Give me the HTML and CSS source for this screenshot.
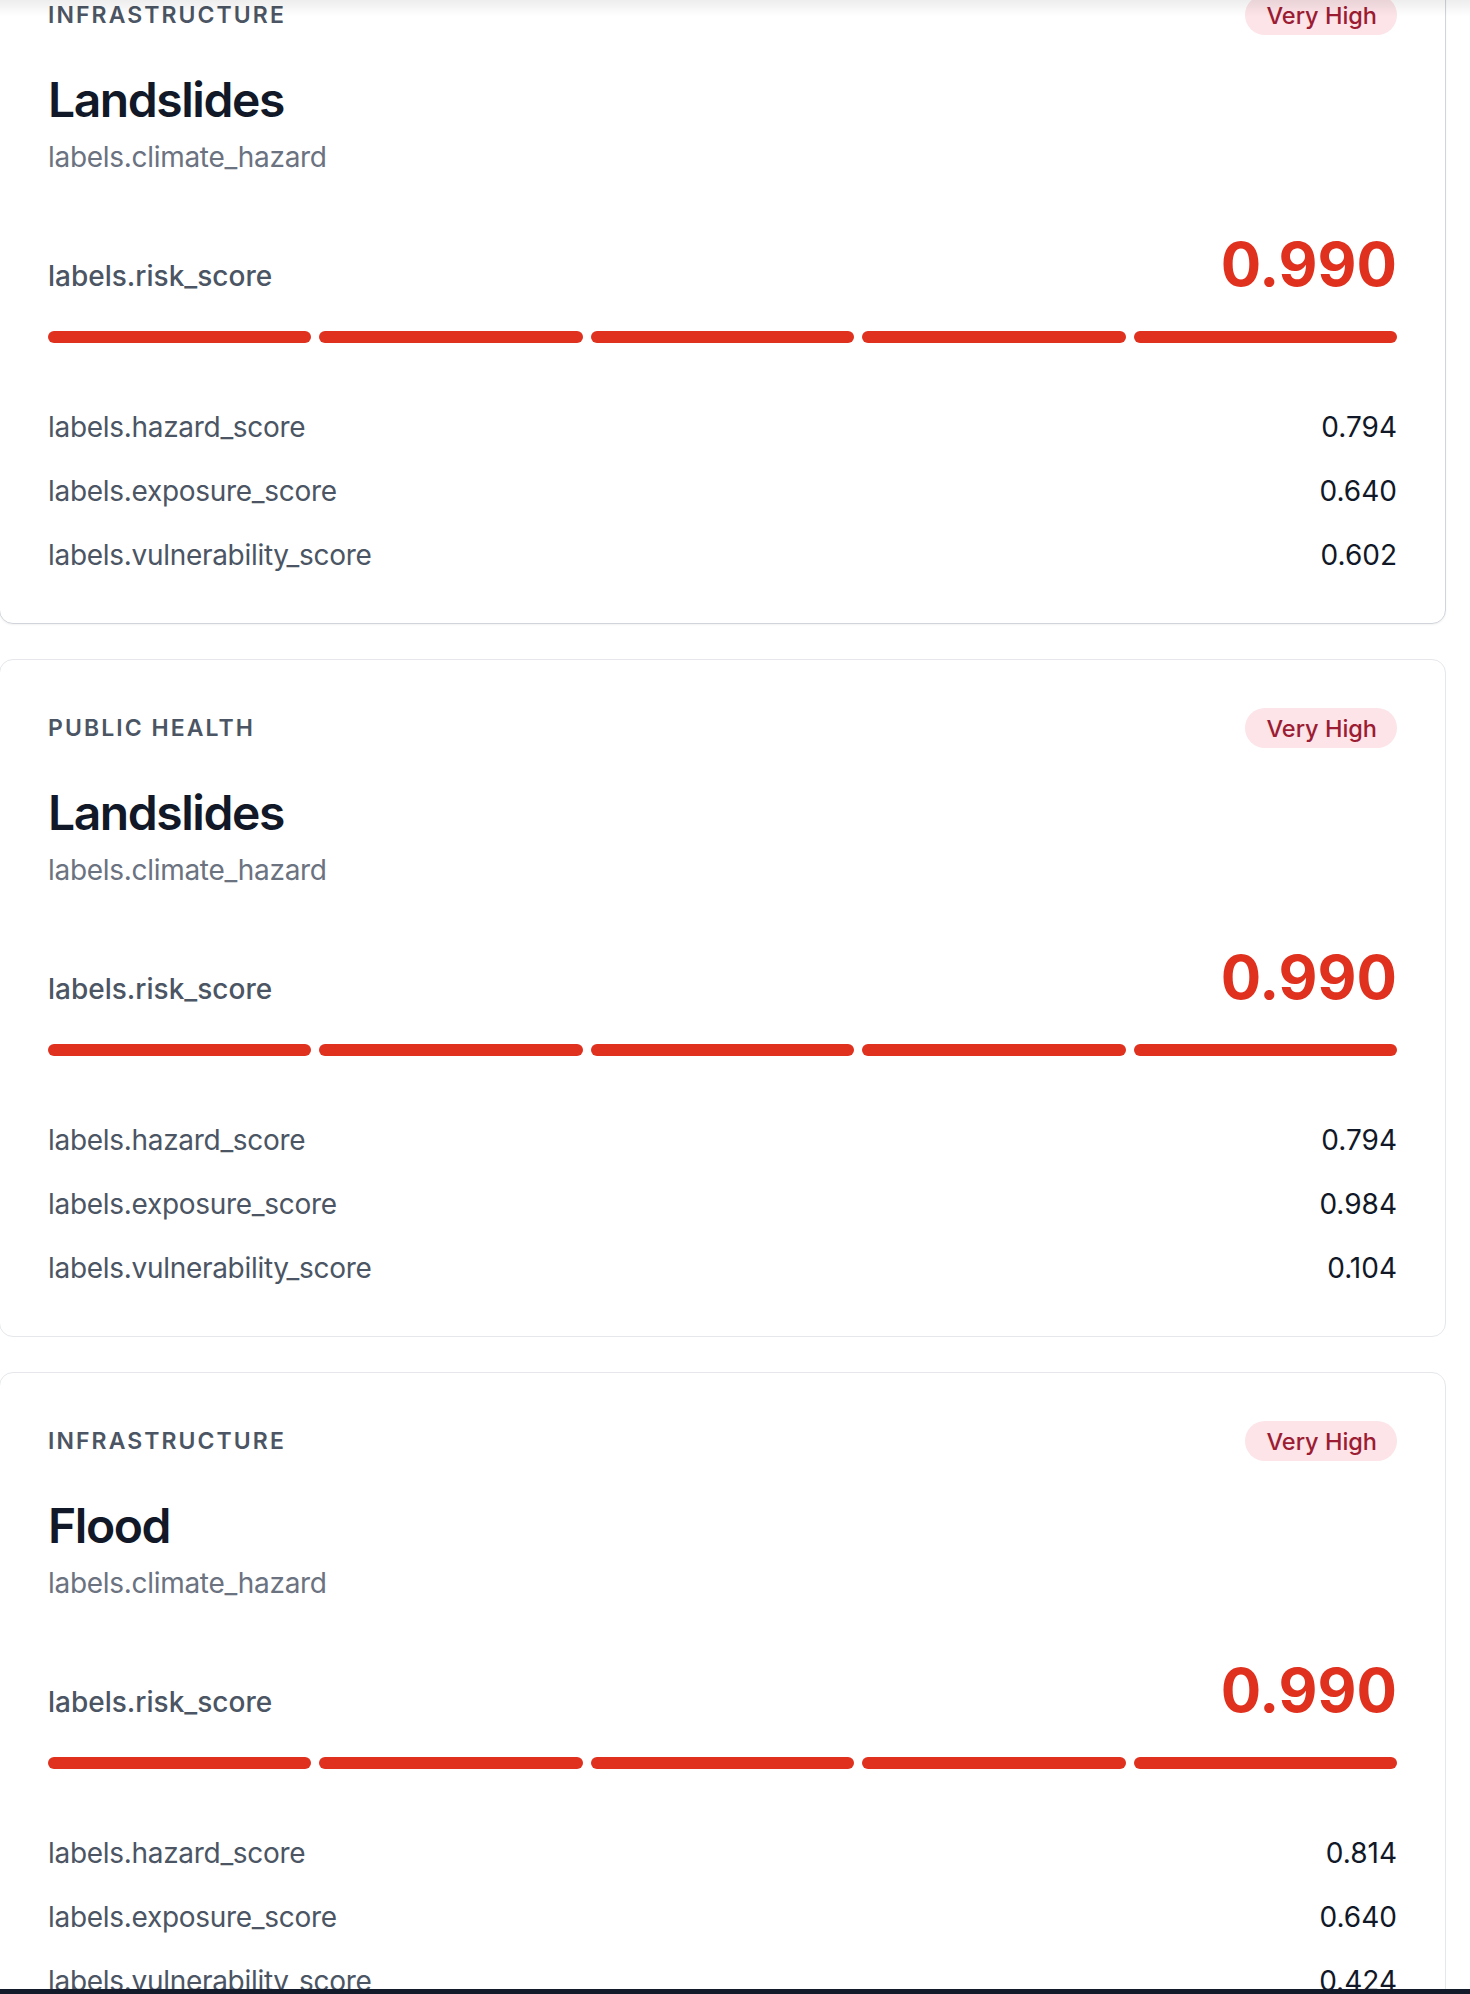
FILE: index.html
```html
<!DOCTYPE html>
<html lang="en">
<head>
<meta charset="utf-8">
<title>Risk cards</title>
<link rel="stylesheet" href="styles.css">
</head>
<body>
<div class="top-shade"></div>
<main class="page">
  <section class="list">
    <article class="card card-active">
      <header class="card-head">
        <span class="category">Infrastructure</span>
        <span class="badge">Very High</span>
      </header>
      <h2 class="title">Landslides</h2>
      <p class="subtitle">labels.climate_hazard</p>
      <div class="risk-row">
        <span class="risk-label">labels.risk_score</span>
        <span class="risk-value">0.990</span>
      </div>
      <div class="bars">
        <span class="bar"></span><span class="bar"></span><span class="bar"></span><span class="bar"></span><span class="bar"></span>
      </div>
      <dl class="rows">
        <div class="row"><dt>labels.hazard_score</dt><dd>0.794</dd></div>
        <div class="row"><dt>labels.exposure_score</dt><dd>0.640</dd></div>
        <div class="row"><dt>labels.vulnerability_score</dt><dd>0.602</dd></div>
      </dl>
    </article>

    <article class="card">
      <header class="card-head">
        <span class="category">Public Health</span>
        <span class="badge">Very High</span>
      </header>
      <h2 class="title">Landslides</h2>
      <p class="subtitle">labels.climate_hazard</p>
      <div class="risk-row">
        <span class="risk-label">labels.risk_score</span>
        <span class="risk-value">0.990</span>
      </div>
      <div class="bars">
        <span class="bar"></span><span class="bar"></span><span class="bar"></span><span class="bar"></span><span class="bar"></span>
      </div>
      <dl class="rows">
        <div class="row"><dt>labels.hazard_score</dt><dd>0.794</dd></div>
        <div class="row"><dt>labels.exposure_score</dt><dd>0.984</dd></div>
        <div class="row"><dt>labels.vulnerability_score</dt><dd>0.104</dd></div>
      </dl>
    </article>

    <article class="card">
      <header class="card-head">
        <span class="category">Infrastructure</span>
        <span class="badge">Very High</span>
      </header>
      <h2 class="title">Flood</h2>
      <p class="subtitle">labels.climate_hazard</p>
      <div class="risk-row">
        <span class="risk-label">labels.risk_score</span>
        <span class="risk-value">0.990</span>
      </div>
      <div class="bars">
        <span class="bar"></span><span class="bar"></span><span class="bar"></span><span class="bar"></span><span class="bar"></span>
      </div>
      <dl class="rows">
        <div class="row"><dt>labels.hazard_score</dt><dd>0.814</dd></div>
        <div class="row"><dt>labels.exposure_score</dt><dd>0.640</dd></div>
        <div class="row"><dt>labels.vulnerability_score</dt><dd>0.424</dd></div>
      </dl>
    </article>
  </section>
</main>
<div class="bottom-bar"></div>
</body>
</html>
```

FILE: styles.css
```css
* { box-sizing: border-box; }

html, body {
  margin: 0;
  padding: 0;
  background: #ffffff;
}

body {
  font-family: Inter, "Noto Sans", "Liberation Sans", sans-serif;
  color: #111827;
  overflow: hidden;
  height: 1994px;
}

.page {
  padding: 0 24px 0 0;
  margin-left: -1px;
}

.list {
  display: flex;
  flex-direction: column;
  gap: 35px;
  margin-top: -54px;
}

.card {
  border: 1px solid #e5e7eb;
  border-radius: 14px;
  padding: 48px;
  background: #ffffff;
}

.card-active {
  border-color: #d1d5db;
  box-shadow: 0 1px 2px rgba(0, 0, 0, 0.05);
}

.card-head {
  display: flex;
  justify-content: space-between;
  align-items: center;
  height: 40px;
}

.category {
  font-size: 23px;
  line-height: 40px;
  font-weight: 600;
  letter-spacing: 0.09em;
  text-transform: uppercase;
  color: #4b5563;
}

.badge {
  display: inline-flex;
  align-items: center;
  height: 40px;
  padding: 0 20px 0 21px;
  border-radius: 20px;
  background: #fce4e8;
  color: #9b1c33;
  font-size: 23.5px;
  font-weight: 500;
}

.title {
  margin: 37px 0 0;
  font-size: 48px;
  line-height: 56px;
  font-weight: 600;
  letter-spacing: -0.03em;
  color: #111827;
}

.subtitle {
  margin: 9px 0 0;
  font-size: 28px;
  line-height: 40px;
  letter-spacing: -0.3px;
  color: #6b7280;
}

.risk-row {
  display: flex;
  justify-content: space-between;
  align-items: baseline;
  margin-top: 55px;
}

.risk-label {
  font-size: 28px;
  line-height: 40px;
  font-weight: 500;
  color: #4b5563;
}

.risk-value {
  font-size: 60px;
  line-height: 64px;
  font-weight: 700;
  color: #e0301e;
}

.bars {
  display: flex;
  gap: 8px;
  margin-top: 35px;
}

.bar {
  flex: 1;
  height: 12px;
  border-radius: 6px;
  background: #e0301e;
}

.rows {
  display: flex;
  flex-direction: column;
  gap: 24px;
  margin: 64px 0 0;
}

.row {
  display: flex;
  justify-content: space-between;
  font-size: 28px;
  line-height: 40px;
}

.row dt {
  color: #4b5563;
  letter-spacing: -0.3px;
}

.row dd {
  margin: 0;
  color: #111827;
}

.top-shade {
  position: fixed;
  top: 0;
  left: 0;
  right: 0;
  height: 16px;
  background: linear-gradient(to bottom, rgba(0, 0, 0, 0.07), rgba(0, 0, 0, 0));
  z-index: 5;
  pointer-events: none;
}

.bottom-bar {
  position: fixed;
  left: 0;
  right: 0;
  bottom: 0;
  height: 5px;
  background: #131a2a;
  z-index: 5;
}
```
